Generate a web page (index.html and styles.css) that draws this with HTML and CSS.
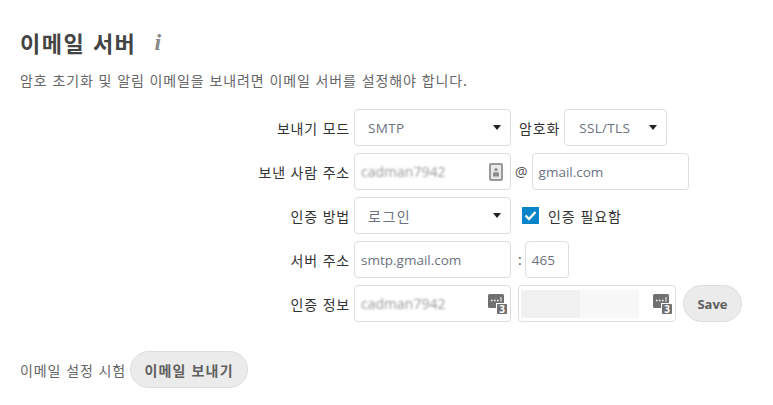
FILE: index.html
```html
<!DOCTYPE html>
<html lang="ko">
<head>
<meta charset="UTF-8">
<title>이메일 서버</title>
<link rel="stylesheet" href="styles.css">
</head>
<body>

<div class="title-row">
    <h1>이메일 서버</h1>
    <span class="info-mark">i</span>
</div>
<p class="desc">암호 초기화 및 알림 이메일을 보내려면 이메일 서버를 설정해야 합니다.</p>

<div class="form">
    <div class="row">
        <label class="row-label">보내기 모드</label>
        <div class="field select wide">SMTP<span class="caret"></span></div>
        <span class="text-label enc-label">암호화</span>
        <div class="field select enc">SSL/TLS<span class="caret"></span></div>
    </div>
    <div class="row">
        <label class="row-label">보낸 사람 주소</label>
        <div class="field wide">
            <span class="blurred">cadman7942</span>
            <svg class="field-icon" width="14" height="18" viewBox="0 0 14 18">
                <rect x="1" y="1" width="12" height="16" rx="1" fill="#e8e8e8" stroke="#999" stroke-width="2"/>
                <circle cx="7" cy="6.500" r="1.600" fill="#8a8a8a"/>
                <path d="M4 13.500v-3c0-.8.7-1.300 1.400-1.300h3.200c.7 0 1.400.5 1.400 1.300v3z" fill="#8a8a8a"/>
            </svg>
        </div>
        <span class="sep at">@</span>
        <div class="field wide">gmail.com</div>
    </div>
    <div class="row">
        <label class="row-label">인증 방법</label>
        <div class="field select wide korean">로그인<span class="caret"></span></div>
        <span class="checkbox">
            <svg width="13" height="11" viewBox="0 0 13 11"><path d="M1.500 5.500l3.500 3.500 6.500-7" fill="none" stroke="#fff" stroke-width="2.400"/></svg>
        </span>
        <span class="text-label">인증 필요함</span>
    </div>
    <div class="row">
        <label class="row-label">서버 주소</label>
        <div class="field wide">smtp.gmail.com</div>
        <span class="sep colon">:</span>
        <div class="field port">465</div>
    </div>
    <div class="row">
        <label class="row-label">인증 정보</label>
        <div class="field wide key-field">
            <span class="blurred">cadman7942</span>
            <svg class="field-icon" width="19" height="20" viewBox="0 0 19 20">
                <path d="M1.500 0h13a1.500 1.500 0 0 1 1.500 1.500v7.500h-8v5h-6.500a1.500 1.500 0 0 1-1.500-1.500v-11a1.500 1.500 0 0 1 1.500-1.500z" fill="#707070"/>
                <rect x="9" y="10" width="10" height="10" rx="1" fill="#707070"/>
                <path d="M3 6.500h1.500M6 6.500h1.500M9 6.500h1.500" stroke="#fff" stroke-width="1.500"/>
                <path d="M13 3v4.500" stroke="#fff" stroke-width="1"/>
                <text x="14" y="18.500" class="key-num">3</text>
            </svg>
        </div>
        <div class="field secret">
            <span class="mask"><span class="mask-a"></span><span class="mask-b"></span></span>
            <svg class="field-icon" width="19" height="20" viewBox="0 0 19 20">
                <path d="M1.500 0h13a1.500 1.500 0 0 1 1.500 1.500v7.500h-8v5h-6.500a1.500 1.500 0 0 1-1.500-1.500v-11a1.500 1.500 0 0 1 1.500-1.500z" fill="#707070"/>
                <rect x="9" y="10" width="10" height="10" rx="1" fill="#707070"/>
                <path d="M3 6.500h1.500M6 6.500h1.500M9 6.500h1.500" stroke="#fff" stroke-width="1.500"/>
                <path d="M13 3v4.500" stroke="#fff" stroke-width="1"/>
                <text x="14" y="18.500" class="key-num">3</text>
            </svg>
        </div>
        <button class="pill save">Save</button>
    </div>
</div>

<div class="test-row">
    <span class="test-label">이메일 설정 시험</span>
    <button class="pill send">이메일 보내기</button>
</div>

</body>
</html>
```

FILE: styles.css
```css
body {
    margin: 0;
    padding: 28px 20px 0;
    background-color: #fff;
    color: #444;
    font-family: "Noto Sans CJK KR", "Open Sans", sans-serif;
    font-size: 14px;
    letter-spacing: 0.9px;
}

.title-row {
    display: flex;
    align-items: center;
    gap: 18px;
    height: 28px;
}

.title-row h1 {
    margin: 0;
    font-size: 22px;
    font-weight: 700;
    line-height: 28px;
    letter-spacing: 1.5px;
    color: #444;
}

.info-mark {
    font-family: "Liberation Serif", serif;
    font-style: italic;
    font-weight: 700;
    font-size: 24px;
    color: #888;
}

.desc {
    margin: 14px 0 0;
    line-height: 20px;
    color: #666;
}

.form {
    display: flex;
    flex-direction: column;
    gap: 7px;
    margin-top: 19px;
}

.row {
    display: flex;
    align-items: center;
    height: 37px;
}

.row-label {
    width: 330px;
    margin-right: 4px;
    text-align: right;
    color: #333;
    letter-spacing: 0.8px;
    white-space: nowrap;
}

.field {
    display: flex;
    align-items: center;
    justify-content: space-between;
    box-sizing: border-box;
    height: 37px;
    padding: 0 6px;
    border: 1px solid #ddd;
    border-radius: 4px;
    background-color: #fff;
    color: #6b7280;
    font-family: "Open Sans", "Noto Sans CJK KR", sans-serif;
    font-size: 13.5px;
    letter-spacing: 0;
}

.wide {
    width: 157px;
}

.select {
    padding: 0 9px 0 13px;
    letter-spacing: 0.3px;
}

.korean {
    font-family: "Noto Sans CJK KR", sans-serif;
    font-size: 14px;
    letter-spacing: 1.5px;
}

.enc {
    width: 103px;
    padding-left: 14px;
}

.port {
    width: 44px;
}

.secret {
    width: 158px;
    margin-left: 7px;
    padding: 0 2px;
}

.key-field {
    padding-right: 2px;
}

.caret {
    width: 0;
    height: 0;
    border-left: 4.5px solid transparent;
    border-right: 4.5px solid transparent;
    border-top: 5px solid #222;
}

.text-label {
    color: #333;
    white-space: nowrap;
}

.enc-label {
    margin: 0 4px 0 8px;
}

.sep {
    color: #555;
    font-family: "Open Sans", sans-serif;
    letter-spacing: 0;
}

.at {
    margin: 0 4px 0 4px;
    font-size: 14px;
}

.colon {
    margin: 0 3px 0 7px;
}

.blurred {
    font-size: 14px;
    letter-spacing: 0;
    color: #999;
    filter: blur(1.3px);
}

.field-icon {
    flex-shrink: 0;
    margin-right: 1px;
}

.key-num {
    font-family: "Open Sans", sans-serif;
    font-size: 10px;
    font-weight: 700;
    fill: #fff;
    text-anchor: middle;
}

.mask {
    display: flex;
    height: 28px;
}

.mask-a {
    width: 59px;
    background-color: #f0f0f0;
}

.mask-b {
    width: 59px;
    background-color: #f7f7f7;
}

.checkbox {
    display: flex;
    align-items: center;
    justify-content: center;
    width: 17px;
    height: 17px;
    margin: 0 9px 0 11px;
    background-color: #0a84c8;
}

.pill {
    height: 37px;
    border: 1px solid #ddd;
    border-radius: 19px;
    background-color: #ebebeb;
    color: #5f5f5f;
    font-family: "Open Sans", "Noto Sans CJK KR", sans-serif;
    font-size: 13px;
    font-weight: 700;
    letter-spacing: 0;
}

.save {
    width: 59px;
    margin-left: 7px;
    padding: 0;
}

.test-row {
    display: flex;
    align-items: center;
    gap: 4px;
    margin-top: 29px;
}

.test-label {
    color: #666;
}

.send {
    width: 118px;
    padding: 0;
    font-size: 14px;
    letter-spacing: 1.2px;
}
```
